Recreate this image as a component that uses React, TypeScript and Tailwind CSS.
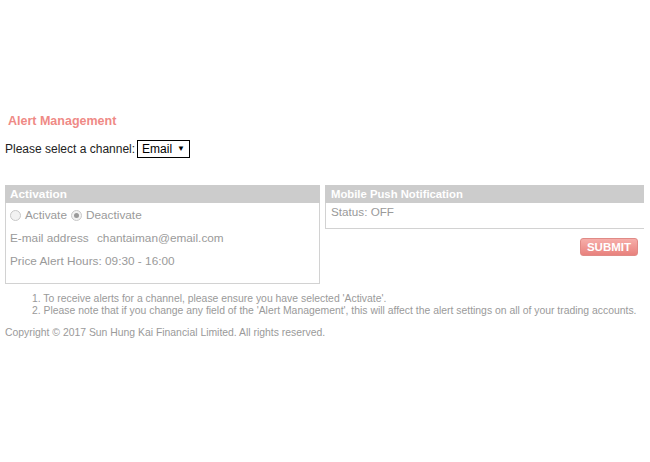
import { useState } from "react";

function Radio({ checked }: { checked: boolean }) {
  return (
    <span className="inline-flex h-[11px] w-[11px] items-center justify-center rounded-full border border-[#c8c8c8] bg-[#f2f2f2]">
      {checked && <span className="h-[5px] w-[5px] rounded-full bg-[#9a9a9a]" />}
    </span>
  );
}

export default function App() {
  const [status, setStatus] = useState<"on" | "off">("off");

  return (
    <div
      className="relative h-[462px] w-[650px] overflow-hidden bg-white px-[5px] pt-[114px]"
      style={{ fontFamily: '"Liberation Sans", Arial, sans-serif' }}
    >
      <h1 className="pl-[3px] text-[12.5px] font-bold leading-[14px] text-[#ef8a86]">
        Alert Management
      </h1>

      <div className="mt-[12px] flex items-center text-[12px] leading-[14px] text-[#222]">
        <span>Please select a channel:</span>
        <span className="ml-[2px] flex h-[18px] w-[53px] items-center border border-black bg-white pl-[4px] text-[12px] text-black">
          Email
          <span className="ml-[5px] text-[8px]">▼</span>
        </span>
      </div>

      {/* panels */}
      <div className="mt-[27px] flex items-start gap-[5px]">
        <section className="h-[99px] w-[315px] border border-t-0 border-[#d2d2d2]">
          <div className="-mx-px h-[18px] bg-[#cccccc] pl-[5px] text-[11.8px] font-bold leading-[18px] text-white">
            Activation
          </div>
          <div className="pl-[4px] text-[11.8px] leading-[14px] text-[#9a9a9a]">
            <div className="mt-[5px] flex items-center">
              <button onClick={() => setStatus("on")} className="flex items-center">
                <Radio checked={status === "on"} />
                <span className="ml-[4px]">Activate</span>
              </button>
              <button onClick={() => setStatus("off")} className="ml-[4px] flex items-center">
                <Radio checked={status === "off"} />
                <span className="ml-[4px]">Deactivate</span>
              </button>
            </div>
            <div className="mt-[9px]">
              E-mail address <span className="ml-[5px]">chantaiman@email.com</span>
            </div>
            <div className="mt-[9px]">Price Alert Hours: 09:30 - 16:00</div>
          </div>
        </section>

        <div className="flex w-[319px] flex-col">
          <section className="h-[44px] border-b border-l border-[#d2d2d2]">
            <div className="-ml-px h-[18px] bg-[#cccccc] pl-[6px] text-[11.3px] font-bold leading-[18px] text-white">
              Mobile Push Notification
            </div>
            <div className="mt-[2px] pl-[5px] text-[11.7px] leading-[14px] text-[#9a9a9a]">
              Status: OFF
            </div>
          </section>
          <button className="mr-[6px] mt-[9px] w-[58px] self-end rounded-[3px] border border-[#e08a86] bg-gradient-to-b from-[#f6aeaa] to-[#e8817d] text-[11.5px] font-bold leading-[16px] text-white">
            SUBMIT
          </button>
        </div>
      </div>

      <ol className="mt-[9px] pl-[27px] text-[10.4px] leading-[12px] text-[#9a9a9a]">
        <li>1. To receive alerts for a channel, please ensure you have selected 'Activate'.</li>
        <li>2. Please note that if you change any field of the 'Alert Management', this will affect the alert settings on all of your trading accounts.</li>
      </ol>

      <p className="mt-[10px] text-[10.4px] leading-[12px] text-[#9a9a9a]">
        Copyright © 2017 Sun Hung Kai Financial Limited. All rights reserved.
      </p>
    </div>
  );
}
